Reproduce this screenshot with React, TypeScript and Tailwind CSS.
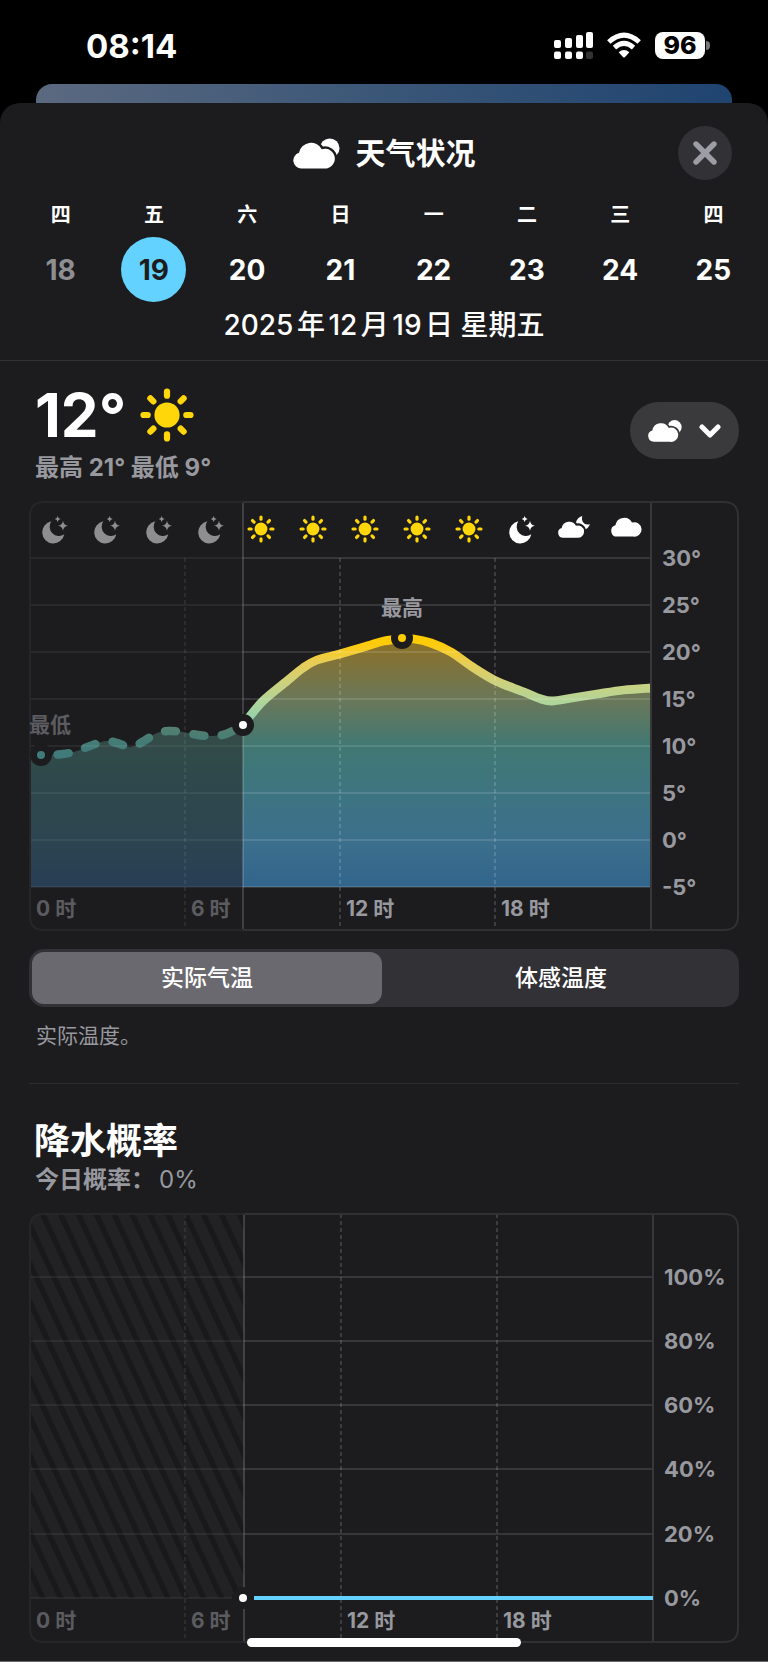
import { useState } from "react";
import type { ReactNode } from "react";

type Point = [number, number];

type ChartFrameProps = {
  id: string;
  title: string;
  nowX: number;
  plotRight: number;
  gridY: number[];
  dashX: number[];
  dashTop: number;
  labels: string[];
  children?: ReactNode;
};

const days = [
  { weekday: "四", date: 18, past: true },
  { weekday: "五", date: 19 },
  { weekday: "六", date: 20 },
  { weekday: "日", date: 21 },
  { weekday: "一", date: 22 },
  { weekday: "二", date: 23 },
  { weekday: "三", date: 24 },
  { weekday: "四", date: 25 },
];

const modes = ["实际气温", "体感温度"];

const pastPoints: Point[] = [
  [0, 253], [12, 254], [34, 253], [48, 250], [61, 245], [77, 240], [88, 242], [102, 246], [115, 240],
  [128, 232], [140, 230], [154, 231], [169, 234], [183, 235], [197, 233], [214, 224],
];

const futurePoints: Point[] = [
  [214, 224], [221, 215], [235, 199], [258, 180], [274, 167], [288, 159], [311, 153], [338, 145], [355, 140],
  [373, 138], [385, 138], [402, 142], [422, 151], [442, 165], [467, 180], [495, 191], [512, 198], [523, 200],
  [543, 197], [568, 193], [595, 189], [622, 187],
];

// Catmull-Rom spline through the points, written as cubic beziers
function smoothPath(points: Point[]) {
  let d = `M${points[0][0]} ${points[0][1]}`;
  for (let i = 0; i < points.length - 1; i++) {
    const p0 = points[i - 1] ?? points[i];
    const p1 = points[i];
    const p2 = points[i + 1];
    const p3 = points[i + 2] ?? p2;
    d += `C${p1[0] + (p2[0] - p0[0]) / 6} ${p1[1] + (p2[1] - p0[1]) / 6} ${p2[0] - (p3[0] - p1[0]) / 6} ${p2[1] - (p3[1] - p1[1]) / 6} ${p2[0]} ${p2[1]}`;
  }
  return d;
}

const pastLine = smoothPath(pastPoints);
const futureLine = smoothPath(futurePoints);

const CLOUD = "M25 81A24 24 0 0 1 18 34A37 37 0 0 1 87 23A30 30 0 1 1 91 81Z";

function SunShape() {
  return (
    <g fill="#ffd60a">
      <circle r="12.6" />
      {[0, 45, 90, 135, 180, 225, 270, 315].map((angle) => (
        <rect key={angle} x="-3.1" y="-26.6" width="6.2" height="10.4" rx="3.1" transform={`rotate(${angle})`} />
      ))}
    </g>
  );
}

function MoonStarsShape({ color }: { color: string }) {
  return (
    <g fill={color}>
      <path d="M-11 -26A33.5 33.5 0 1 0 28 13A28 28 0 0 1 -11 -26Z" />
      <path d="M24 -28Q26 -15 39 -13Q26 -11 24 2Q22 -11 9 -13Q22 -15 24 -28Z" />
      <path d="M8 -42Q9 -34 17 -33Q9 -32 8 -24Q7 -32 -1 -33Q7 -34 8 -42Z" />
    </g>
  );
}

function CloudSun({ className, gap }: { className: string; gap: string }) {
  return (
    <svg viewBox="0 0 142 92" className={className} fill="#fff" aria-hidden="true">
      <circle cx="111" cy="30" r="29.5" />
      <path d={CLOUD} transform="translate(0 10)" stroke={gap} strokeWidth="14" />
      <path d={CLOUD} transform="translate(0 10)" />
    </svg>
  );
}

function StatusBar() {
  return (
    <div className="flex h-[84px] items-start justify-between pr-[58px] pl-[86px] pt-[26px] text-white">
      <span className="text-[33px] leading-10 font-bold">08:14</span>
      <div className="flex items-center gap-[14px] pt-[6px]">
        <svg width="39" height="27" viewBox="0 0 39 27" fill="#fff" aria-hidden="true">
          <rect x="0" y="8" width="7" height="8" rx="2" />
          <rect x="11" y="6" width="7" height="10" rx="2" />
          <rect x="22" y="3" width="7" height="13" rx="2" />
          <rect x="32" y="0" width="7" height="16" rx="2" />
          <rect x="0" y="19.5" width="7" height="7.5" rx="2" />
          <rect x="11" y="19.5" width="7" height="7.5" rx="2" />
          <rect x="22" y="19.5" width="7" height="7.5" rx="2" />
          <rect x="32" y="19.5" width="7" height="7.5" rx="2" fill="#333" />
        </svg>
        <svg width="34" height="27" viewBox="0 0 34 27" aria-hidden="true">
          <path d="M1.8 10Q17-3.6 32.2 10" fill="none" stroke="#fff" strokeWidth="5" />
          <path d="M7.5 15.6Q17 7.2 26.5 15.6" fill="none" stroke="#fff" strokeWidth="5" />
          <path d="M11.6 20.2Q17 15.6 22.4 20.2L17.8 25.2Q17 26 16.2 25.2Z" fill="#fff" />
        </svg>
        <div className="flex items-center gap-px">
          <span className="flex h-[27px] w-[50px] items-center justify-center rounded-lg bg-white text-[25px] font-extrabold text-black">
            96
          </span>
          <span className="h-[9px] w-[4px] rounded-r-full bg-[#777]" />
        </div>
      </div>
    </div>
  );
}

function ChartFrame({ id, title, nowX, plotRight, gridY, dashX, dashTop, labels, children }: ChartFrameProps) {
  return (
    <svg viewBox="0 0 710 430" className="block h-auto w-full" role="img" aria-label={title}>
      <defs>
        <clipPath id={`${id}-frame`}>
          <rect width="710" height="430" rx="14" />
        </clipPath>
      </defs>
      <g clipPath={`url(#${id}-frame)`}>{children}</g>
      <g strokeWidth="2" fill="none">
        {gridY.map((y) => (
          <g key={y}>
            <path d={`M0 ${y}H${nowX}`} stroke="#fff" strokeOpacity="0.06" />
            <path d={`M${nowX} ${y}H${plotRight}`} stroke="#fff" strokeOpacity="0.12" />
          </g>
        ))}
        {dashX.map((x) => (
          <path key={x} d={`M${x} ${dashTop}V427`} stroke="#fff" strokeOpacity={x < nowX ? 0.07 : 0.15} strokeDasharray="4 3" />
        ))}
        <path d={`M${nowX} 1V430`} stroke="#fff" strokeOpacity="0.16" />
        <path d={`M${plotRight} 1V430`} stroke="#38383a" />
        <path d={`M${nowX} 1H15Q1 1 1 15V415Q1 429 15 429H${nowX}`} stroke="#262628" />
        <path d={`M${nowX} 1H695Q709 1 709 15V415Q709 429 695 429H${nowX}`} stroke="#303032" />
      </g>
      <g fontSize="22" fontWeight="700" fill="#98989f">
        {labels.map((label, i) => (
          <text key={label} x={plotRight + 11} y={gridY[i] + 8}>
            {label}
          </text>
        ))}
      </g>
      <g fontSize="21" fontWeight="700">
        <text x="7" y="415" fill="#5b5b60">0 时</text>
        <text x={dashX[0] + 6} y="415" fill="#5b5b60">6 时</text>
        <text x={dashX[1] + 6} y="415" fill="#98989f">12 时</text>
        <text x={dashX[2] + 6} y="415" fill="#98989f">18 时</text>
      </g>
    </svg>
  );
}

function TemperatureChart() {
  return (
    <div className="relative">
      <ChartFrame
        id="temp"
        title="气温"
        nowX={214}
        plotRight={622}
        gridY={[57, 104, 151, 198, 245, 292, 339, 386]}
        dashX={[156, 311, 466]}
        dashTop={57}
        labels={["30°", "25°", "20°", "15°", "10°", "5°", "0°", "-5°"]}
      >
        <defs>
          <linearGradient id="temp-line" gradientUnits="userSpaceOnUse" x1="0" y1="138" x2="0" y2="254">
            <stop offset="0" stopColor="#ffcc00" />
            <stop offset="0.06" stopColor="#fccb12" />
            <stop offset="0.2" stopColor="#e8cd55" />
            <stop offset="0.38" stopColor="#cdd17e" />
            <stop offset="0.55" stopColor="#aed59b" />
            <stop offset="0.75" stopColor="#8cd2b2" />
            <stop offset="1" stopColor="#6cc8bb" />
          </linearGradient>
          <linearGradient id="temp-past-line" gradientUnits="userSpaceOnUse" x1="0" y1="226" x2="0" y2="254">
            <stop offset="0" stopColor="#54806f" />
            <stop offset="0.6" stopColor="#437b77" />
            <stop offset="1" stopColor="#407a7a" />
          </linearGradient>
          <linearGradient id="temp-fill" gradientUnits="userSpaceOnUse" x1="0" y1="138" x2="0" y2="386">
            <stop offset="0" stopColor="#8c7024" />
            <stop offset="0.1" stopColor="#80733a" />
            <stop offset="0.25" stopColor="#69785a" />
            <stop offset="0.43" stopColor="#417873" />
            <stop offset="0.65" stopColor="#3d7483" />
            <stop offset="0.82" stopColor="#3b6f8c" />
            <stop offset="1" stopColor="#32658c" />
          </linearGradient>
          <linearGradient id="temp-past-fill" gradientUnits="userSpaceOnUse" x1="0" y1="224" x2="0" y2="386">
            <stop offset="0" stopColor="#364c47" />
            <stop offset="0.3" stopColor="#2e494b" />
            <stop offset="0.7" stopColor="#2c4550" />
            <stop offset="1" stopColor="#283e55" />
          </linearGradient>
        </defs>
        <path d={`${pastLine}V386H0Z`} fill="url(#temp-past-fill)" />
        <path d={`${futureLine}V386H214Z`} fill="url(#temp-fill)" />
        <path d={pastLine} fill="none" stroke="url(#temp-past-line)" strokeWidth="8.5" strokeLinecap="round" strokeDasharray="11 17.6" />
        <path d={futureLine} fill="none" stroke="url(#temp-line)" strokeWidth="8.8" />
        <g transform="translate(26 28)">
          {[0, 52, 104, 156].map((x) => (
            <g key={x} transform={`translate(${x} 1) scale(0.333)`}>
              <MoonStarsShape color="#8e8e90" />
            </g>
          ))}
          {[206, 258, 310, 362, 414].map((x) => (
            <g key={x} transform={`translate(${x} 0) scale(0.51)`}>
              <SunShape />
            </g>
          ))}
          <g transform="translate(467 1) scale(0.333)">
            <MoonStarsShape color="#fff" />
          </g>
          <g transform="translate(503 -13) scale(0.333)" fill="#fff">
            <path d="M73 0C57 4 48 22 58 35C70 50 90 42 96 24C82 30 68 18 73 0Z" />
            <path d={CLOUD} transform="translate(0 15) scale(0.62)" stroke="#1c1c1e" strokeWidth="20" />
            <path d={CLOUD} transform="translate(0 15) scale(0.62)" />
          </g>
          <path d={CLOUD} transform="translate(556 -12) scale(0.242)" fill="#fff" />
        </g>
      </ChartFrame>
      {/* markers sit above the grid lines */}
      <svg viewBox="0 0 710 430" className="absolute inset-0 h-full w-full" aria-hidden="true">
        <circle cx="12" cy="254" r="11" fill="#1c1c1e" />
        <circle cx="12" cy="254" r="4" fill="#407a7a" />
        <circle cx="214" cy="224" r="11" fill="#1c1c1e" />
        <circle cx="214" cy="224" r="4" fill="#fff" />
        <circle cx="373" cy="137" r="11" fill="#1c1c1e" />
        <circle cx="373" cy="137" r="4" fill="#ffcc00" />
        <g fontSize="21" fontWeight="700">
          <text x="0" y="231" fill="#5b5b60">最低</text>
          <text x="373" y="114" fill="#98989f" textAnchor="middle">最高</text>
        </g>
      </svg>
    </div>
  );
}

function RainChart() {
  return (
    <div className="relative">
      <ChartFrame
        id="rain"
        title="降水概率"
        nowX={215}
        plotRight={624}
        gridY={[64, 128, 192, 256, 321, 385]}
        dashX={[156, 312, 468]}
        dashTop={1}
        labels={["100%", "80%", "60%", "40%", "20%", "0%"]}
      >
        <defs>
          <pattern id="hatch" width="16.2" height="16" patternUnits="userSpaceOnUse" patternTransform="translate(10 0) rotate(-25)">
            <rect width="16.2" height="16" fill="#222224" />
            <rect width="5.5" height="16" fill="#19191b" />
          </pattern>
        </defs>
        <rect width="215" height="385" fill="url(#hatch)" />
      </ChartFrame>
      <svg viewBox="0 0 710 430" className="absolute inset-0 h-full w-full" aria-hidden="true">
        <path d="M225 385H624" stroke="#64d2ff" strokeWidth="4" />
        <circle cx="214" cy="385" r="11" fill="#1c1c1e" />
        <circle cx="214" cy="385" r="4" fill="#fff" />
      </svg>
    </div>
  );
}

export default function App() {
  const [selected, setSelected] = useState(19);
  const [mode, setMode] = useState(modes[0]);

  return (
    <div lang="zh-CN" className="bg-black font-['Inter','Noto_Sans_CJK_SC',sans-serif] [text-autospace:normal]">
      <StatusBar />
      <div className="mx-9 h-[19px] rounded-t-2xl bg-linear-to-r from-[#5b6980] via-[#3a5677] to-[#1f4470]" />

      <main className="rounded-t-[20px] border-b border-[#68686b] bg-[#1c1c1e] pt-[23px] pb-[18px] text-white">
        <header className="border-b border-[#323234] pb-[17px]">
          <div className="grid grid-cols-[54px_1fr_54px] items-center px-9">
            <h1 className="col-start-2 flex items-center justify-center gap-4 text-[30px] leading-10 font-bold">
              <CloudSun className="h-[31px] w-[47px]" gap="#1c1c1e" />
              天气状况
            </h1>
            <button aria-label="关闭" className="flex size-[54px] items-center justify-center rounded-full bg-[#313136]">
              <svg width="24" height="24" viewBox="0 0 24 24" aria-hidden="true">
                <path d="M3 3L21 21M21 3L3 21" stroke="#9d9da6" strokeWidth="5.4" strokeLinecap="round" />
              </svg>
            </button>
          </div>

          <div className="mt-[21px] grid grid-cols-8 pr-2 pl-[14px]">
            {days.map((day) => {
              const active = day.date === selected;

              return (
                <button key={day.date} onClick={() => setSelected(day.date)} className="flex flex-col items-center gap-2 font-bold">
                  <span className="text-xl leading-7">{day.weekday}</span>
                  <span
                    className={`flex size-[65px] items-center justify-center rounded-full text-[28px] ${
                      active ? "bg-[#64d2ff] text-[#1c1c1e]" : day.past ? "text-[#8e8e93]" : "text-white"
                    }`}
                  >
                    {day.date}
                  </span>
                </button>
              );
            })}
          </div>
          <p className="mt-[5px] text-center text-[28px] leading-9 font-medium">2025年12月19日 星期五</p>
        </header>

        <section className="px-[29px] pt-[27px]">
          <div className="flex items-start justify-between">
            <div className="pl-1.5">
              <div className="flex h-[54px] items-center gap-[14px]">
                <span className="text-[60px] leading-none font-bold">12°</span>
                <svg viewBox="-27 -27 54 54" className="size-[54px]" aria-hidden="true">
                  <SunShape />
                </svg>
              </div>
              <p className="mt-[10px] text-2xl leading-8 font-bold text-[#98989f]">最高 21° 最低 9°</p>
            </div>
            <button aria-label="选择天气状况" className="mt-[14px] flex h-[57px] w-[109px] items-center justify-center gap-[17px] rounded-full bg-[#3a3a3d]">
              <CloudSun className="h-[22px] w-[34px]" gap="#3a3a3d" />
              <svg width="22" height="14" viewBox="0 0 22 14" fill="none" aria-hidden="true">
                <path d="M3 3L11 11L19 3" stroke="#fff" strokeWidth="5" strokeLinecap="round" strokeLinejoin="round" />
              </svg>
            </button>
          </div>

          <div className="mt-[17px]">
            <TemperatureChart />
          </div>

          <div className="mt-[18px] grid h-[58px] grid-cols-2 gap-1 rounded-[15px] bg-[#313136] p-[3px]">
            {modes.map((item) => (
              <button
                key={item}
                aria-pressed={item === mode}
                onClick={() => setMode(item)}
                className={`rounded-xl text-[23px] font-medium ${item === mode ? "bg-[#6a696f]" : ""}`}
              >
                {item}
              </button>
            ))}
          </div>
          <p className="mt-[14px] pl-[7px] text-[21px] leading-[30px] text-[#98989f]">实际温度。</p>
        </section>

        <section className="mx-[29px] mt-8 border-t border-[#2c2c2e] pt-[35px]">
          <h2 className="pl-[5px] text-4xl leading-[44px] font-bold">降水概率</h2>
          <p className="mt-px mb-[17px] pl-1.5 text-2xl leading-8 text-[#98989f]">
            <span className="mr-1 font-semibold">今日概率：</span>0%
          </p>
          <RainChart />
        </section>
      </main>

      <div className="fixed bottom-[15px] left-1/2 h-[9px] w-[274px] -translate-x-1/2 rounded-full bg-white" />
    </div>
  );
}
